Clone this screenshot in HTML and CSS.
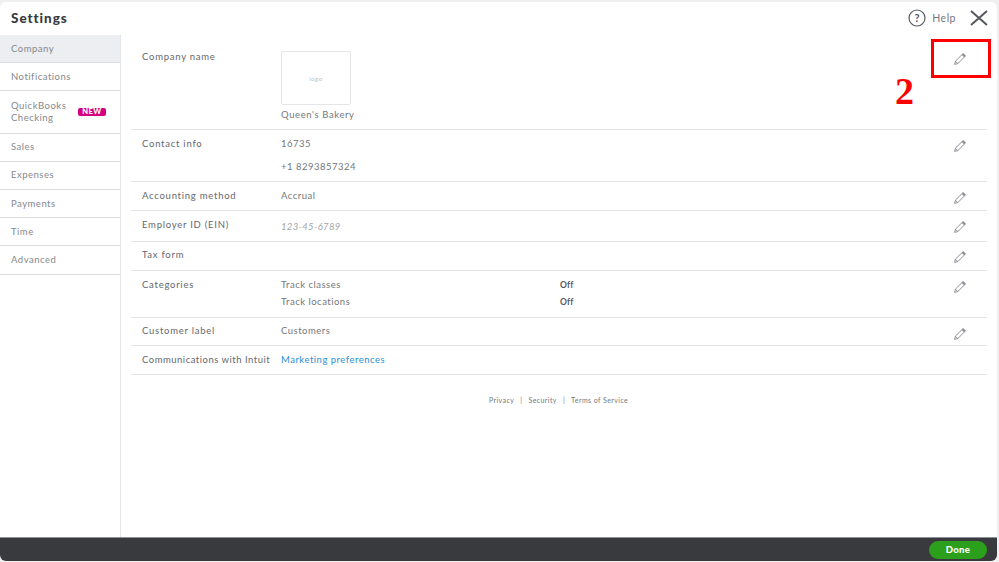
FILE: index.html
```html
<!DOCTYPE html>
<html lang="en">
<head>
<meta charset="utf-8">
<title>Settings</title>
<link rel="stylesheet" href="styles.css">
</head>
<body>
<svg class="defs" width="0" height="0"><symbol id="pencil" viewBox="0 0 14 14"><path d="M1.6 12.4l.8-3.2 6.9-6.9a1.1 1.1 0 0 1 1.6 0l.8.8a1.1 1.1 0 0 1 0 1.6l-6.9 6.9-3.2.8zM2.4 9.2l2.4 2.4" fill="none" stroke="#8d9096" stroke-width="1"/><path d="M8.7 2.9l1.5-1.6 2.5 2.5-1.6 1.5z" fill="#8d9096"/></symbol></svg>
<div class="modal">
  <header class="top">
    <h1 class="title">Settings</h1>
    <div class="tools">
      <svg class="help-icon" viewBox="0 0 18 18" width="18" height="18"><circle cx="9" cy="9" r="8" fill="none" stroke="#55585e" stroke-width="1.2"/><text x="9" y="12.6" text-anchor="middle" class="help-q">?</text></svg>
      <span class="help">Help</span>
      <svg class="close" viewBox="0 0 18 16" width="18" height="16"><path d="M1 1l16 14M17 1L1 15" stroke="#55585e" stroke-width="2" fill="none"/></svg>
    </div>
  </header>
  <div class="body">
    <nav class="side">
      <a class="item h28 active">Company</a>
      <a class="item h28">Notifications</a>
      <a class="item h43"><span class="two">QuickBooks<br>Checking</span><span class="new">NEW</span></a>
      <a class="item h28 up">Sales</a>
      <a class="item h28 up">Expenses</a>
      <a class="item h28">Payments</a>
      <a class="item h28">Time</a>
      <a class="item h29">Advanced</a>
    </nav>
    <main class="main">
      <section class="row r-company">
        <div class="label">Company name</div>
        <div class="value">
          <div class="logo">logo</div>
          <div class="qb">Queen's Bakery</div>
        </div>
        <svg class="edit"><use href="#pencil"/></svg>
      </section>
      <section class="row r-contact">
        <div class="label">Contact info</div>
        <div class="value stack"><span>16735</span><span>+1 8293857324</span></div>
        <svg class="edit"><use href="#pencil"/></svg>
      </section>
      <section class="row r-acc">
        <div class="label">Accounting method</div>
        <div class="value">Accrual</div>
        <svg class="edit"><use href="#pencil"/></svg>
      </section>
      <section class="row r-ein">
        <div class="label">Employer ID (EIN)</div>
        <div class="value hint">123-45-6789</div>
        <svg class="edit"><use href="#pencil"/></svg>
      </section>
      <section class="row r-tax">
        <div class="label">Tax form</div>
        <div class="value"></div>
        <svg class="edit"><use href="#pencil"/></svg>
      </section>
      <section class="row r-cat">
        <div class="label">Categories</div>
        <div class="value cats">
          <span>Track classes</span><span class="off">Off</span>
          <span>Track locations</span><span class="off">Off</span>
        </div>
        <svg class="edit"><use href="#pencil"/></svg>
      </section>
      <section class="row r-cust">
        <div class="label">Customer label</div>
        <div class="value">Customers</div>
        <svg class="edit"><use href="#pencil"/></svg>
      </section>
      <section class="row r-comm">
        <div class="label tight">Communications with Intuit</div>
        <div class="value"><a class="link">Marketing preferences</a></div>
      </section>
      <footer class="legal"><span>Privacy</span><i>|</i><span>Security</span><i>|</i><span>Terms of Service</span></footer>
      <div class="redbox"></div>
      <div class="two-mark">2</div>
    </main>
  </div>
  <div class="bar"><button class="done">Done</button></div>
</div>
</body>
</html>
```

FILE: styles.css
```css
* { box-sizing: border-box; }
html, body { margin: 0; height: 100%; }
body {
  background: #f0f0f1;
  overflow: hidden;
  font-family: "Lato", "Liberation Sans", sans-serif;
  color: #55585e;
  padding: 2px 2px 1px 0;
}
.defs { position: absolute; }
.modal {
  height: 559px;
  background: #fff;
  border-radius: 6px;
  display: flex;
  flex-direction: column;
  overflow: hidden;
}
.top {
  height: 33px;
  flex: none;
  display: flex;
  align-items: center;
  justify-content: space-between;
  padding: 0 9px 2px 11px;
}
.title {
  margin: 0;
  font-size: 13.5px;
  font-weight: 900;
  letter-spacing: 0.95px;
  color: #393a3d;
}
.tools { display: flex; align-items: center; }
.help-icon { margin: 0 6px 0 -2px; }
.help-q { font: 700 11px "Lato", sans-serif; fill: #55585e; }
.help { font-size: 10.5px; letter-spacing: 0.5px; color: #75777c; margin-right: 14px; }
.body { flex: 1; display: flex; min-height: 0; }
.side {
  width: 121px;
  flex: none;
  border-right: 1px solid #e3e5e8;
}
.item {
  display: flex;
  align-items: center;
  padding: 0 0 1px 11px;
  font-size: 9.5px;
  letter-spacing: 0.5px;
  color: #85888d;
  border-bottom: 1px solid #dcdee1;
}
.up { padding-bottom: 3px; }
.h28 { height: 28px; }
.h29 { height: 29px; }
.h43 { height: 43px; }
.active { background: #eceef1; }
.two { line-height: 12px; }
.new {
  margin-left: 12px;
  background: #d4007f;
  color: #fff;
  font-size: 7.5px;
  font-weight: 900;
  line-height: 8px;
  padding: 0 4px;
  border-radius: 2px;
  letter-spacing: 0.5px;
}
.main { flex: 1; padding: 0 10px; position: relative; min-width: 0; }
.row {
  display: flex;
  padding-left: 11px;
  border-bottom: 1px solid #e3e5e8;
  font-size: 9.5px;
  letter-spacing: 0.5px;
  position: relative;
}
.label { width: 139px; flex: none; color: #65686d; letter-spacing: 0.75px; }
.label.tight { letter-spacing: 0.5px; }
.value { flex: 1; color: #74777c; }
.edit {
  position: absolute;
  right: 20px;
  width: 14px;
  height: 14px;
}
.r-company { height: 95px; padding-top: 16px; }
.r-company .edit { top: 17px; }
.logo {
  width: 70px;
  height: 54px;
  border: 1px solid #e3e5e8;
  border-radius: 2px;
  display: flex;
  align-items: center;
  justify-content: center;
  font-size: 6.5px;
  letter-spacing: 0.3px;
  color: #c4c6ca;
}
.qb { margin-top: 4px; letter-spacing: 0.6px; }
.r-contact { height: 52px; padding-top: 8px; }
.r-contact .edit { top: 9px; }
.stack { display: flex; flex-direction: column; gap: 12px; line-height: 11px; }
.r-acc { height: 29px; padding-top: 8px; }
.r-acc .edit { top: 9px; }
.r-ein { height: 31px; padding-top: 8px; }
.r-ein .edit { top: 9px; }
.hint { color: #a3a5a9; font-style: italic; padding-top: 2px; letter-spacing: 0.35px; }
.r-tax { height: 29px; padding-top: 7px; }
.r-tax .edit { top: 8px; }
.r-cat { height: 47px; padding-top: 8px; }
.r-cat .edit { top: 9px; }
.cats {
  display: grid;
  grid-template-columns: 279px 1fr;
  row-gap: 5px;
  align-content: start;
  line-height: 11px;
}
.off { font-size: 8.5px; font-weight: 700; letter-spacing: 0.2px; color: #55585e; padding-top: 1px; }
.r-cust { height: 28px; padding-top: 7px; }
.r-cust .edit { top: 9px; }
.r-comm { height: 29px; padding-top: 8px; }
.link { color: #2b8fd1; }
.legal {
  margin-top: 21px;
  margin-left: 358px;
  display: flex;
  gap: 6px;
  font-size: 7px;
  letter-spacing: 0.42px;
  color: #74777c;
}
.legal i { font-style: normal; }
.redbox {
  position: absolute;
  left: 810px;
  top: 4px;
  width: 60px;
  height: 39px;
  border: 3px solid #f00;
}
.two-mark {
  position: absolute;
  left: 774px;
  top: 36px;
  font: 700 38px/40px "Liberation Serif", serif;
  color: #f00;
}
.bar {
  height: 24px;
  flex: none;
  background: #393a3d;
  border-top: 1px solid #8d9096;
  display: flex;
  align-items: center;
  justify-content: flex-end;
  padding-right: 10px;
}
.done {
  width: 58px;
  height: 18px;
  border: 0;
  border-radius: 9px;
  background: #2ca01c;
  color: #fff;
  font: 900 9.5px "Lato", sans-serif;
  letter-spacing: 0.4px;
  padding: 0;
}
```
